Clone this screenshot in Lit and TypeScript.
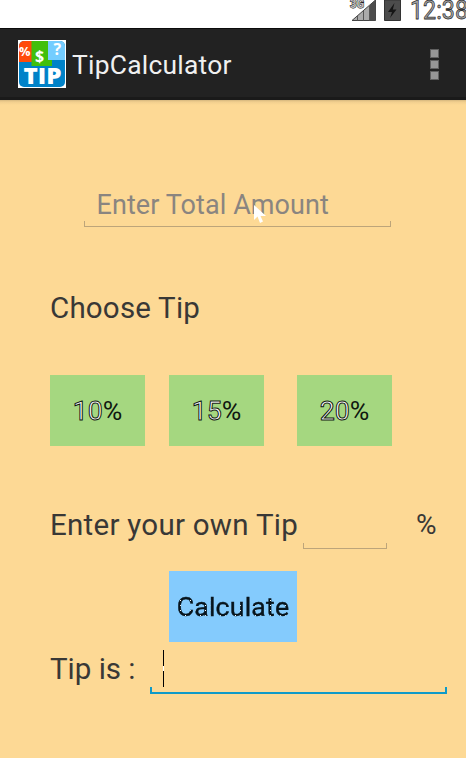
import { LitElement, html, css } from "lit";
import { customElement, property } from "lit/decorators.js";

@customElement("status-bar")
class StatusBar extends LitElement {
  static styles = css`
    :host { display: flex; height: 28px; background: #fff; overflow: hidden; justify-content: flex-end; }
    svg { display: block; width: 126px; height: 28px; }
    .net { font: 700 13px Roboto, sans-serif; fill: #bbb; stroke: #222; stroke-width: 1.1px; paint-order: stroke; }
    .clock { font: 400 26px Roboto, sans-serif; fill: #aaa; stroke: #333; stroke-width: 0.8px; }
  `;
  render() {
    return html`<svg viewBox="0 0 126 28">
      <path d="M12 20.5L35.5 0V20.5Z" fill="#aaa" stroke="#444" stroke-width="1" />
      <path d="M17.5 16V20.5M23.5 11V20.5M29.5 6V20.5" stroke="#555" stroke-width="1" />
      <path d="M30 5L35.5 0V20.5H30Z" fill="#4c4c4c" />
      <text class="net" x="10" y="8" textLength="14" lengthAdjust="spacingAndGlyphs">3G</text>
      <path d="M44.5 0H60.5V20.5H44.5Z" fill="#4c4c4c" stroke="#333" />
      <path d="M54.5 3L48 12H52L50 18L56.5 9.5H52.8Z" fill="#151515" />
      <text class="clock" x="70" y="19" textLength="58" lengthAdjust="spacingAndGlyphs">12:38</text>
    </svg>`;
  }
}

@customElement("action-bar")
class ActionBar extends LitElement {
  static styles = css`
    :host { display: flex; box-sizing: border-box; height: 72px; align-items: center; padding: 0 27px 0 18px;
      background: #222; border-top: 1px solid #0c0c0c; border-bottom: 3px solid #1a1a1a; }
    .logo { width: 48px; height: 48px; margin-top: 2px; flex: none; }
    .small { font: 700 13px "Open Sans", sans-serif; fill: #fff; }
    .big { font-size: 16px; }
    .tip { font: 800 22px "Open Sans", sans-serif; fill: #fff; }
    .title { margin: 3px 0 0 6px; font: 26.4px/40px Roboto, sans-serif; letter-spacing: 0.25px; color: #f0f0f0; flex: 1; white-space: nowrap; }
    .menu { display: grid; gap: 2px; margin-top: 3px; }
    .dot { width: 7px; height: 7px; background: #969696; border: 1px solid #606060; }
  `;
  render() {
    return html`
      <svg class="logo" viewBox="0 0 48 48">
        <rect width="48" height="48" fill="#fff" />
        <clipPath id="round"><rect x="1" y="1" width="46" height="46" rx="5" /></clipPath>
        <g clip-path="url(#round)">
          <rect width="48" height="48" fill="#0082c8" />
          <rect width="14" height="22" fill="#ff4b0b" />
          <rect x="13.5" width="20.5" height="26" fill="#41bf0b" />
          <rect x="30" width="18" height="20" fill="#74cdff" />
        </g>
        <text class="small" x="1" y="16" textLength="11.5" lengthAdjust="spacingAndGlyphs">%</text>
        <text class="small big" x="17" y="22">$</text>
        <text class="small big" x="35.5" y="15">?</text>
        <text class="tip" x="5.5" y="44" textLength="38" lengthAdjust="spacingAndGlyphs">TIP</text>
      </svg>
      <div class="title">TipCalculator</div>
      <div class="menu"><div class="dot"></div><div class="dot"></div><div class="dot"></div></div>
    `;
  }
}

@customElement("line-field")
class LineField extends LitElement {
  @property() hint = "";
  @property({ type: Boolean, reflect: true }) active = false;
  static styles = css`
    :host { display: flex; flex-direction: column; justify-content: flex-end; position: relative; }
    .hint { flex: none; font: 27px/40px Roboto, sans-serif; color: #8a8580; padding-left: 12.5px; margin-bottom: -4px; white-space: nowrap; letter-spacing: 0.08px; }
    .line { flex: none; box-sizing: border-box; height: 6px; border: 1px solid #bda57a; border-top: 0; }
    :host([active]) .line { height: 7px; border: 2px solid #0f9ac8; border-top: 0; }
    .caret { width: 1px; height: 37px; margin: 0 0 0 13px;
      background: linear-gradient(#000 0 16px, #fff 16px 21px, #000 21px); }
  `;
  render() {
    return html`
      ${this.hint ? html`<div class="hint">${this.hint}</div>` : ""}
      ${this.active ? html`<div class="caret"></div>` : ""}
      <div class="line"></div>`;
  }
}

@customElement("app-root")
class AppRoot extends LitElement {
  static styles = css`
    :host { display: block; width: 466px; height: 758px; overflow: hidden; background: #fdd995;
      font: 29.5px/40px Roboto, sans-serif; color: #393836; }
    main { display: flex; flex-direction: column; padding: 84px 0 0 50px;
      background: linear-gradient(#d5b77e 0, #f2cf8e 2px, #fdd995 5px); }
    .total { position: relative; width: 307px; margin-left: 34px; }
    .total line-field { height: 43px; }
    .pointer { position: absolute; left: 170px; top: 21px; width: 12px; height: 19px; }
    .choose { margin-top: 61px; letter-spacing: 0.2px; }
    .tips { display: flex; margin-top: 47px; }
    .btn { box-sizing: border-box; width: 95px; height: 71px; background: #a5d780; color: #101810; font-size: 26.7px; line-height: 73px;
      text-align: center; white-space: nowrap; }
    .btn + .btn { margin-left: 24px; }
    .btn + .btn + .btn { margin-left: 33px; }
    .digits { color: #fff; -webkit-text-stroke: 1px #101810; }
    .own { display: flex; height: 44px; margin-top: 59px; }
    .own-label { width: 253px; white-space: nowrap; letter-spacing: 0.27px; }
    .own line-field { width: 84px; }
    .percent { margin-left: 29px; font-size: 28px; }
    .calc { width: 128px; height: 71px; margin: 22px 0 0 119px; background: #84cbfd; line-height: 72px;
      font-size: 26.7px; color: transparent; text-align: center; }
    .calc span { -webkit-text-stroke: 0.4px transparent; letter-spacing: 0.2px;
      background: radial-gradient(circle at 50% 50%, #fff 0 0.7px, transparent 1px) 1px 2px / 5px 5px, #07141c;
      background-clip: text; -webkit-background-clip: text; }
    .result { display: flex; height: 45px; margin-top: 7px; }
    .result-label { width: 100px; white-space: nowrap; }
    .result line-field { width: 297px; }
  `;
  render() {
    return html`
      <status-bar></status-bar>
      <action-bar></action-bar>
      <main>
        <div class="total">
          <line-field hint="Enter Total Amount"></line-field>
          <svg class="pointer" viewBox="0 0 12 19"><path d="M0 0V15L3.5 11.5L6 18L9 16.5L6.5 11H12Z" fill="#fff" /></svg>
        </div>
        <div class="choose">Choose Tip</div>
        <div class="tips">
          ${["10", "15", "20"].map((n) => html`<div class="btn"><span class="digits">${n}</span>%</div>`)}
        </div>
        <div class="own">
          <div class="own-label">Enter your own Tip</div>
          <line-field></line-field>
          <div class="percent">%</div>
        </div>
        <div class="calc"><span>Calculate</span></div>
        <div class="result">
          <div class="result-label">Tip is :</div>
          <line-field active></line-field>
        </div>
      </main>
    `;
  }
}
